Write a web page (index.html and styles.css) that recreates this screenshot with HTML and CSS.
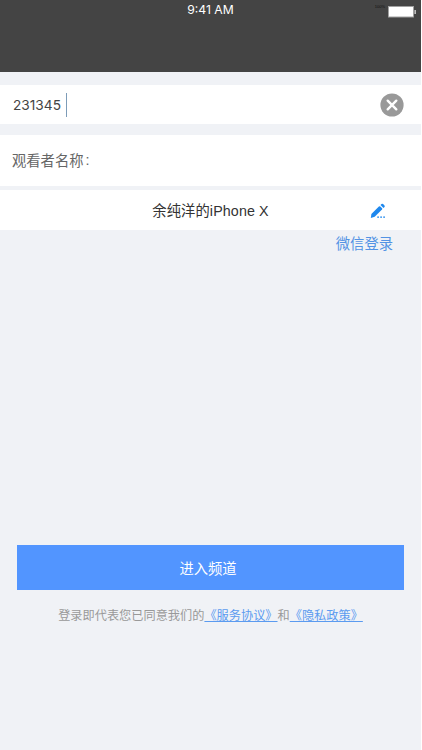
FILE: index.html
```
<!DOCTYPE html>
<html lang="zh-CN">

<head>
  <meta charset="UTF-8">
  <meta name="viewport" content="width=device-width, initial-scale=1.0">
  <title>进入频道</title>
  <link rel="stylesheet" href="styles.css">
</head>

<body>
  <div class="page">
    <header class="top-bar">
      <span class="time">9:41 AM</span>
      <div class="battery">
        <span class="battery-text">100%</span>
        <svg width="28" height="12" viewBox="0 0 28 12">
          <rect x="0.5" y="0.5" width="25" height="10.5" fill="#fff" stroke="#a0a0a0" />
          <rect x="26.5" y="4" width="1.3" height="4" fill="#ddd" />
        </svg>
      </div>
    </header>

    <div class="channel-row">
      <span class="channel-id">231345</span>
      <span class="cursor"></span>
      <svg class="clear-icon" width="24" height="24" viewBox="0 0 24 24">
        <circle cx="12" cy="12" r="11.6" fill="#999" />
        <path d="M7.7 7.7L16.3 16.3M16.3 7.7L7.7 16.3" stroke="#fff" stroke-width="2.4" stroke-linecap="round" />
      </svg>
    </div>

    <div class="label-row">观看者名称<span class="colon">:</span></div>

    <div class="name-row">
      <span class="name">余纯洋的iPhone X</span>
      <svg class="edit-icon" width="16" height="16" viewBox="0 0 16 16" fill="#1e88ee">
        <path d="M0.8 15L1.4 10.9L8.9 3.4Q9.6 2.9 10.3 3.5L12.1 5.3Q12.6 6 12 6.6L4.7 13.8Z" />
        <path d="M10.5 2L11.5 1Q12.3 0.4 13.1 1.1L14.5 2.5Q15.1 3.3 14.5 4L13.5 5Z" />
        <path d="M7.2 13.5h1.8v1.3h-1.8zM10.2 13.5h1.8v1.3h-1.8zM13.2 13.5h1.8v1.3h-1.8z" />
      </svg>
    </div>

    <a class="wechat-login">微信登录</a>

    <button class="enter-btn">进入频道</button>

    <p class="agreement">登录即代表您已同意我们的<a>《服务协议》</a>和<a>《隐私政策》</a></p>
  </div>
</body>

</html>
```
FILE: styles.css
```
body {
  margin: 0;
  background: #fff;
  font-family: "Liberation Sans", "Noto Sans CJK SC", sans-serif;
}

.page {
  width: 421px;
  height: 750px;
  background: #f0f2f6;
  display: flex;
  flex-direction: column;
  overflow: hidden;
}

.top-bar {
  position: relative;
  flex: none;
  height: 72px;
  margin-bottom: 13px;
  background: #444;
  text-align: center;
}

.time {
  display: block;
  color: #fff;
  font-family: Inter, sans-serif;
  font-size: 12.2px;
  line-height: 19px;
}

/* sits over the right end of the bar */
.battery {
  position: absolute;
  top: 6px;
  right: 5px;
  display: flex;
}

.battery-text {
  margin: -2px 3px 0 0;
  color: #111;
  font-size: 4px;
  line-height: 5px;
}

.channel-row,
.label-row,
.name-row {
  display: flex;
  align-items: center;
  flex: none;
  box-sizing: border-box;
  background: #fff;
}

.channel-row {
  height: 39px;
  margin-bottom: 11px;
  padding: 0 17px 0 13px;
}

.channel-id {
  color: #444;
  font-family: Inter, sans-serif;
  font-size: 13.7px;
}

.cursor {
  width: 1px;
  height: 24px;
  margin-left: 5px;
  background: #7d9cb8;
}

.clear-icon {
  margin-left: auto;
}

.label-row {
  height: 51px;
  margin-bottom: 4px;
  padding: 0 0 2px 12px;
  color: #666;
  font-size: 14.3px;
}

.colon {
  margin-left: 2px;
}

.name-row {
  position: relative;
  justify-content: center;
  height: 39.5px;
  padding-bottom: 0.5px;
  color: #333;
  font-size: 14.3px;
}

.name {
  letter-spacing: 0.1px;
}

.edit-icon {
  position: absolute;
  top: 13px;
  right: 35px;
}

.wechat-login {
  align-self: flex-end;
  margin: 4.5px 28px 0 0;
  color: #5393e4;
  font-size: 14.3px;
  line-height: 20px;
}

.enter-btn {
  flex: none;
  height: 45px;
  margin: auto 17px 0;
  padding: 0 5px 0 0;
  border: 0;
  background: #5295ff;
  color: #fff;
  font-family: inherit;
  font-size: 14.3px;
}

.agreement {
  flex: none;
  height: 143px;
  margin: 17px 0 0;
  color: #999;
  font-size: 12.2px;
  line-height: 18px;
  text-align: center;
}

.agreement a {
  color: #5b9bf0;
  text-decoration: underline;
}
```
